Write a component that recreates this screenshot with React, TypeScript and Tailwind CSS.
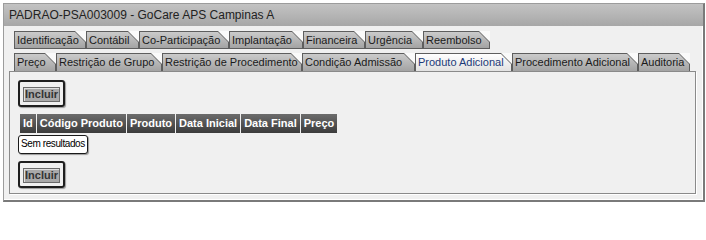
import React from 'react';

type Tab = { label: string; width: number; active?: boolean };

const rowOne: Tab[] = [
  { label: 'Identificação', width: 72 },
  { label: 'Contábil', width: 53 },
  { label: 'Co-Participação', width: 90 },
  { label: 'Implantação', width: 74 },
  { label: 'Financeira', width: 62 },
  { label: 'Urgência', width: 58 },
  { label: 'Reembolso', width: 67 },
];

const rowTwo: Tab[] = [
  { label: 'Preço', width: 42 },
  { label: 'Restrição de Grupo', width: 106 },
  { label: 'Restrição de Procedimento', width: 140 },
  { label: 'Condição Admissão', width: 113 },
  { label: 'Produto Adicional', width: 97, active: true },
  { label: 'Procedimento Adicional', width: 126 },
  { label: 'Auditoria', width: 52 },
];

const columns = ['Id', 'Código Produto', 'Produto', 'Data Inicial', 'Data Final', 'Preço'];

function TabItem({ tab, bottomBorder }: { tab: Tab; bottomBorder: boolean }) {
  return (
    <div className="relative h-[18px] shrink-0" style={{ width: tab.width }}>
      {/* folded corner */}
      <div className="absolute inset-0 bg-[#fafafa] [clip-path:polygon(calc(100%_-_11px)_0,100%_0,100%_11px)]" />
      <div className="absolute inset-0 bg-[#5e5e5e] [clip-path:polygon(0_0,calc(100%_-_11px)_0,100%_11px,100%_100%,0_100%)]" />
      <div
        className={`absolute left-[1px] right-[1px] top-[1px] ${bottomBorder && !tab.active ? 'bottom-[1px]' : 'bottom-0'} [clip-path:polygon(0_0,calc(100%_-_10px)_0,100%_10px,100%_100%,0_100%)] ${
          tab.active ? 'bg-gradient-to-b from-[#ffffff] to-[#e2e2e2]' : 'bg-gradient-to-b from-[#cbcbcb] to-[#a3a3a3]'
        }`}
      />
      <span
        className={`relative block pl-[3px] pt-[2px] text-[11px] leading-[15px] whitespace-nowrap ${
          tab.active ? 'text-[#1c3a78]' : 'text-[#1a1a1a]'
        }`}
      >
        {tab.label}
      </span>
    </div>
  );
}

function IncluirBox() {
  return (
    <div className="w-[47px] h-[27px] border-2 border-[#1e1e1e] rounded-[3px] shadow-[1px_1px_1px_#9a9a9a] pl-[3px] pt-[5px]">
      <div className="flex items-center justify-center w-[37px] h-[15px] bg-[#a9a9a9] border border-[#6a6a6a] shadow-[inset_1px_1px_0_#e0e0e0] text-[11px] font-bold leading-[13px] text-[#333333] cursor-pointer">
        Incluir
      </div>
    </div>
  );
}

export default function App() {
  return (
    <div className="w-[706px] h-[205px] bg-white pl-[3px] pt-[3px] font-['Liberation_Sans',Arial,sans-serif]">
      <div className="w-[702px] h-[199px] flex flex-col bg-[#f0f0f0] border-l border-t border-[#9c9c9c] border-r-2 border-b-2 border-r-[#7a7a7a] border-b-[#7a7a7a] shadow-[inset_-1px_-1px_0_#ffffff]">
        <div className="h-[22px] shrink-0 bg-gradient-to-b from-[#c3c3c3] to-[#a7a7a7] pl-[5px] text-[12px] leading-[22px] text-[#222222]">
          PADRAO-PSA003009 - GoCare APS Campinas A
        </div>

        <div className="pl-[5px] pt-[5px]">
          <div className="flex pl-[5px] mb-[4px]">
            {rowOne.map(tab => (
              <TabItem key={tab.label} tab={tab} bottomBorder />
            ))}
          </div>
          <div className="flex pl-[5px]">
            {rowTwo.map(tab => (
              <TabItem key={tab.label} tab={tab} bottomBorder={false} />
            ))}
          </div>

          <div className="w-[687px] h-[123px] border border-[#8a8a8a] shadow-[1px_1px_0_#ffffff] pl-[8px] pt-[8px]">
            <IncluirBox />

            <div className="flex gap-[1px] mt-[7px] ml-[2px] w-max">
              {columns.map(col => (
                <div
                  key={col}
                  className="h-[19px] px-[3px] bg-gradient-to-b from-[#6c6c6c] to-[#3c3c3c] text-[11px] font-bold leading-[19px] text-white whitespace-nowrap"
                >
                  {col}
                </div>
              ))}
            </div>

            <div className="mt-[2px] w-[70px] h-[19px] border-[1.5px] border-[#1a1a1a] rounded-[3px] bg-white shadow-[1px_1px_1px_#9a9a9a] pl-[2px] text-[10px] tracking-[-0.4px] leading-[16px] text-black whitespace-nowrap">
              Sem resultados
            </div>

            <div className="mt-[7px]">
              <IncluirBox />
            </div>
          </div>
        </div>
      </div>
    </div>
  );
}
